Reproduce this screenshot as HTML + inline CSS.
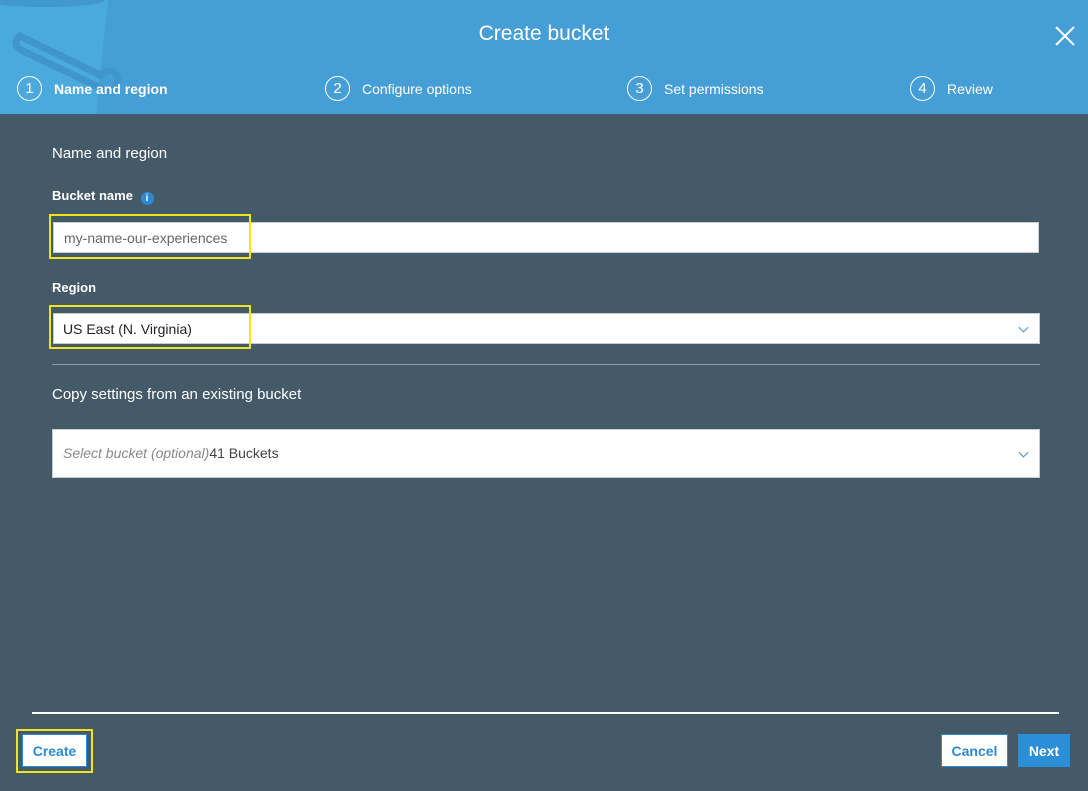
<!DOCTYPE html>
<html><head><style>
*{margin:0;padding:0;box-sizing:border-box}
body{width:1088px;height:791px;background:#455a69;font-family:"Liberation Sans",sans-serif;position:relative;overflow:hidden;color:#fff}
.hdr{position:absolute;left:0;top:0;width:1088px;height:114px;background:#459fd6;overflow:hidden}
.ab{position:absolute}
.step{position:absolute;top:76px;font-size:14px;color:#fff;display:flex;align-items:center}
.step span.c{width:25px;height:25px;border:1.5px solid #fff;border-radius:50%;display:inline-flex;align-items:center;justify-content:center;font-size:15px;margin-right:12px}
.box{position:absolute;background:#fff;border:1px solid #c8ccd0}
.yl{position:absolute;border:2px solid #f2e31b}
.lbl{position:absolute;font-size:13px;font-weight:bold}
.chev{position:absolute;right:12px;top:50%;width:7px;height:7px;border-right:1.5px solid #3a8fd0;border-bottom:1.5px solid #3a8fd0;transform:translateY(-70%) rotate(45deg)}
.btn{position:absolute;top:734px;height:33px;font-size:14px;font-weight:bold;display:flex;align-items:center;justify-content:center}
</style></head><body>
<div class="hdr">
 <svg class="ab" style="left:0;top:0" width="140" height="114" viewBox="0 0 140 114">
  <path d="M0 0 H108 L96 114 H0 Z" fill="#4aaade"/>
  <ellipse cx="45" cy="0" rx="60" ry="7" fill="#4198cf"/>
  <path d="M20 36 L100 75 Q115 65 118 80 Q115 95 105 90 L25 52 Q10 45 20 36 Z" fill="none" stroke="#3f95cc" stroke-width="7" stroke-linecap="round"/>
 </svg>
 <div class="ab" style="left:0;width:1088px;top:22px;text-align:center;font-size:21px">Create bucket</div>
 <svg class="ab" style="left:1055px;top:26px" width="20" height="20"><path d="M1 1L19 19M19 1L1 19" stroke="#fff" stroke-width="2"/></svg>
 <div class="step" style="left:17px"><span class="c">1</span><b>Name and region</b></div>
 <div class="step" style="left:325px"><span class="c">2</span>Configure options</div>
 <div class="step" style="left:627px"><span class="c">3</span>Set permissions</div>
 <div class="step" style="left:910px"><span class="c">4</span>Review</div>
</div>
<div class="ab" style="left:52px;top:145px;font-size:15px">Name and region</div>
<div class="lbl" style="left:52px;top:188px">Bucket name <span style="display:inline-block;width:13px;height:13px;border-radius:50%;background:#2a8bd4;color:#fff;font-size:10px;text-align:center;line-height:13px;margin-left:4px;vertical-align:-1px">i</span></div>
<div class="box" style="left:53px;top:222px;width:986px;height:31px"><span class="ab" style="left:10px;top:7px;font-size:14px;color:#666">my-name-our-experiences</span></div>
<div class="yl" style="left:49px;top:214px;width:202px;height:45px"></div>
<div class="lbl" style="left:52px;top:280px">Region</div>
<div class="box" style="left:53px;top:313px;width:987px;height:31px"><span class="ab" style="left:9px;top:7px;font-size:14px;color:#222">US East (N. Virginia)</span><div class="chev"></div></div>
<div class="yl" style="left:49px;top:305px;width:202px;height:44px"></div>
<div class="ab" style="left:52px;top:364px;width:988px;height:1px;background:#8a98a3"></div>
<div class="ab" style="left:52px;top:386px;font-size:15px">Copy settings from an existing bucket</div>
<div class="box" style="left:52px;top:429px;width:988px;height:49px"><span class="ab" style="left:10px;top:15px;font-size:14px;color:#888"><i>Select bucket (optional)</i><span style="color:#444">41 Buckets</span></span><div class="chev"></div></div>
<div class="ab" style="left:32px;top:712px;width:1027px;height:2px;background:#fff"></div>
<div class="yl" style="left:16px;top:729px;width:77px;height:44px"></div>
<div class="btn" style="left:22px;width:65px;background:#fff;border:1px solid #2a8bd4;color:#2a8bd4">Create</div>
<div class="btn" style="left:941px;width:67px;background:#fff;border:1px solid #2a8bd4;color:#2a8bd4">Cancel</div>
<div class="btn" style="left:1018px;width:52px;background:#2a8fd6;color:#fff">Next</div>
</body></html>
